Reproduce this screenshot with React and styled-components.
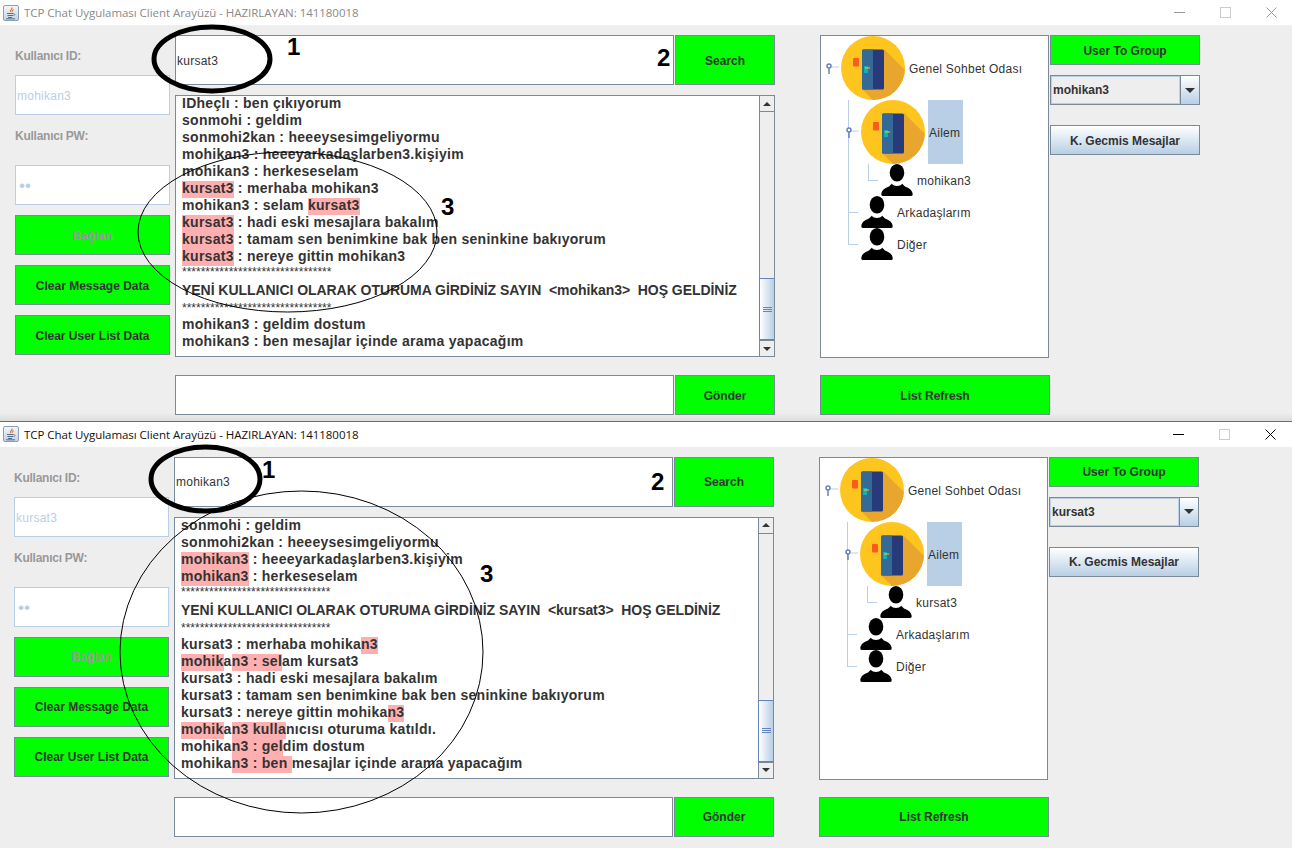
import React from 'react'
import styled, { createGlobalStyle } from 'styled-components'

const Global = createGlobalStyle`
  html, body { margin: 0; padding: 0; background: #eeeeee; }
  body { width: 1292px; height: 848px; overflow: hidden; font-family: "Liberation Sans", Arial, sans-serif; }
`

const Page = styled.div`
  width: 1292px;
  height: 848px;
  display: flex;
  flex-direction: column;
`

const Window = styled.section`
  position: relative;
  height: ${p => p.$height}px;
  display: flex;
  flex-direction: column;
  background: #eeeeee;
  border-top: ${p => (p.$active ? '1px solid #0f86e6' : 'none')};
`

const TitleBar = styled.header`
  height: 25px;
  flex: none;
  display: flex;
  align-items: center;
  background: #fff;
  padding-left: 3px;
  padding-right: ${p => (p.$active ? 16 : 15)}px;
`

const TitleText = styled.span`
  margin-left: 5px;
  font: 11.5px "Open Sans", "Liberation Sans", sans-serif;
  letter-spacing: -0.04px;
  color: ${p => (p.$active ? '#111' : '#8a8a8a')};
  white-space: pre;
`

const Controls = styled.div`
  margin-left: auto;
  display: flex;
  gap: 35px;
  color: ${p => (p.$active ? '#000' : '#999')};
`

const Content = styled.div`
  flex: 1;
  display: flex;
  align-items: flex-start;
  padding: 10px 0 0 ${p => (p.$active ? 14 : 15)}px;
  background: ${p => (p.$active ? '#eeeeee' : 'linear-gradient(#eeeeee 0, #eeeeee 388px, #dcdcdc 396px)')};
`

const LeftColumn = styled.div`
  width: 155px;
  display: flex;
  flex-direction: column;
`

const FieldLabel = styled.div`
  height: 20px;
  line-height: 20px;
  font-size: 12px;
  font-weight: bold;
  letter-spacing: -0.25px;
  color: #999999;
  margin-top: ${p => p.$top}px;
  margin-bottom: ${p => p.$bottom}px;
`

const DisabledField = styled.div`
  height: 40px;
  box-sizing: border-box;
  background: #fff;
  border: 1px solid #b8cfe5;
  padding: 1px 0 0 1px;
  line-height: 38px;
  font-size: 12px;
  letter-spacing: 0.25px;
  color: #b8cfe5;
`

const Dots = styled.span`
  font-size: 17px;
  letter-spacing: 0;
  margin-left: 2px;
`

const GreenButton = styled.div`
  box-sizing: border-box;
  height: ${p => p.$h || 40}px;
  width: ${p => (p.$w ? `${p.$w}px` : 'auto')};
  flex: none;
  margin-top: ${p => p.$top || 0}px;
  padding-top: 1px;
  background: #00ff00;
  border: 1px solid #7a8a99;
  display: flex;
  align-items: center;
  justify-content: center;
  font-size: 12px;
  font-weight: bold;
  color: ${p => (p.$disabled ? '#999999' : '#333333')};
`

const CenterColumn = styled.div`
  width: 600px;
  margin-left: 5px;
  display: flex;
  flex-direction: column;
`

const InputRow = styled.div`
  display: flex;
  gap: 1px;
  height: ${p => p.$h}px;
  margin-top: ${p => p.$top || 0}px;
`

const TextInput = styled.div`
  flex: 1;
  box-sizing: border-box;
  background: #fff;
  border: 1px solid #7a8a99;
  padding: 1px 0 0 1px;
  display: flex;
  align-items: center;
  font-size: 12px;
  letter-spacing: 0.25px;
  color: #333333;
`

const MessageBox = styled.div`
  margin-top: 10px;
  height: 262px;
  box-sizing: border-box;
  display: flex;
  background: #fff;
  border: 1px solid #7a8a99;
  border-right: none;
`

const MessageList = styled.div`
  flex: 1;
  overflow: hidden;
  padding-left: 6px;
  color: #333333;
  font-size: 14px;
  font-weight: bold;
`

const Line = styled.div`
  height: 17px;
  line-height: 15px;
  letter-spacing: 0.27px;
  white-space: pre;
`

const Banner = styled.div`
  height: 22px;
  line-height: 20px;
  letter-spacing: -0.05px;
  white-space: pre;
`

const Stars = styled.div`
  height: 14px;
  line-height: 12px;
  font-size: 12px;
  font-weight: normal;
  white-space: pre;

  ${Banner} + & {
    height: 15px;
  }
`

const Hit = styled.span`
  display: inline-block;
  height: 17px;
  background: #ffafaf;
`

const ScrollBar = styled.div`
  width: 16px;
  flex: none;
  display: flex;
  flex-direction: column;
  background: #eeeeee;
  border-left: 1px solid #7a8a99;
  border-right: 1px solid #7a8a99;
  box-sizing: border-box;
`

const ScrollButton = styled.div`
  height: 15px;
  flex: none;
  display: flex;
  align-items: center;
  justify-content: center;
  background: #eeeeee;
  border-${p => (p.$up ? 'bottom' : 'top')}: 1px solid #7a8a99;
`

const Arrow = styled.span`
  width: 0;
  height: 0;
  border-left: ${p => p.$size || 4}px solid transparent;
  border-right: ${p => p.$size || 4}px solid transparent;
  border-${p => (p.$up ? 'bottom' : 'top')}: ${p => p.$size || 4}px solid #333333;
`

const ScrollTrack = styled.div`
  flex: 1;
  display: flex;
  flex-direction: column;
  justify-content: flex-end;
`

const ScrollThumb = styled.div`
  height: 62px;
  box-sizing: border-box;
  margin-left: -1px;
  border: 1px solid #6382bf;
  border-right: none;
  background: linear-gradient(90deg, #ffffff, #b8cfe5);
  display: flex;
  flex-direction: column;
  align-items: center;
  justify-content: center;
  gap: 1px;
`

const Grip = styled.span`
  width: 9px;
  height: 1px;
  background: #6382bf;
`

const TreeColumn = styled.div`
  width: 230px;
  margin-left: 45px;
  display: flex;
  flex-direction: column;
`

const Tree = styled.div`
  width: 229px;
  height: 323px;
  box-sizing: border-box;
  background: #fff;
  border: 1px solid #7a8a99;
`

const TreeRow = styled.div`
  position: relative;
  display: flex;
  align-items: center;
  height: ${p => p.$h}px;
  padding-left: ${p => p.$indent}px;
  font-size: 12px;
  letter-spacing: 0.25px;
  color: #333333;
`

const TreeLabel = styled.span`
  align-self: stretch;
  display: flex;
  align-items: center;
  margin-left: ${p => (p.$selected ? 3 : 4)}px;
  padding: ${p => (p.$selected ? '2px 3px 0 1px' : '2px 0 0')};
  background: ${p => (p.$selected ? '#b8cfe5' : 'transparent')};
`

const Guide = styled.span`
  position: absolute;
  left: ${p => p.$left}px;
  top: 0;
  height: ${p => (p.$half ? '50%' : '100%')};
  width: 1px;
  background: #b8cfe5;
`

const Tick = styled.span`
  position: absolute;
  left: ${p => p.$left}px;
  top: 50%;
  width: 10px;
  height: 1px;
  background: #b8cfe5;
`

const Handle = styled.svg`
  position: absolute;
  left: ${p => p.$left}px;
  top: 50%;
  margin-top: -5px;
`

const RightColumn = styled.div`
  width: 150px;
  margin-left: 0;
  display: flex;
  flex-direction: column;
`

const Combo = styled.div`
  box-sizing: border-box;
  height: 30px;
  margin-top: 10px;
  display: flex;
  border: 1px solid #7a8a99;
`

const ComboValue = styled.div`
  flex: 1;
  box-sizing: border-box;
  border: 1px solid #b8cfe5;
  background: #eeeeee;
  padding-left: 1px;
  line-height: 26px;
  font-size: 12px;
  font-weight: bold;
  color: #333333;
`

const ComboButton = styled.div`
  width: 18px;
  border-left: 1px solid #7a8a99;
  display: flex;
  align-items: center;
  justify-content: center;
  background: linear-gradient(#ffffff, #b8cfe5);
`

const GradientButton = styled.div`
  box-sizing: border-box;
  height: 30px;
  margin-top: 20px;
  padding-top: 1px;
  border: 1px solid #7a8a99;
  display: flex;
  align-items: center;
  justify-content: center;
  background: linear-gradient(#ffffff, #b8cfe5);
  font-size: 12px;
  font-weight: bold;
  color: #333333;
`

const Marks = styled.svg`
  position: absolute;
  left: 0;
  top: 0;
  pointer-events: none;
`

const Number = styled.span`
  position: absolute;
  left: ${p => p.$x}px;
  top: ${p => p.$y}px;
  font-size: 24px;
  line-height: 24px;
  font-weight: bold;
  color: #000;
`

const JavaIcon = () => (
  <svg width="16" height="16" viewBox="0 0 16 16">
    <defs>
      <linearGradient id="jbox" x1="0" y1="0" x2="0" y2="1">
        <stop offset="0" stopColor="#f4f7fa" />
        <stop offset="1" stopColor="#c4d1dd" />
      </linearGradient>
    </defs>
    <rect x="0.5" y="0.5" width="15" height="15" rx="1.5" fill="url(#jbox)" stroke="#8ca0b3" />
    <path d="M9 2.5c1 1.5-2.5 2.5-1.5 4.500M10.500 4.500c-1 1-2 1.300-1.200 2.500" fill="none" stroke="#e8702a" strokeWidth="1.100" />
    <path d="M4 8.500h6.500M4.500 10.500h5.500M5 12.500h4M3 13.800h9" fill="none" stroke="#4f6f96" strokeWidth="1" />
    <path d="M10.500 8.800c1.800-.3 1.800 1.700 0 1.700" fill="none" stroke="#4f6f96" strokeWidth=".8" />
  </svg>
)

const WindowButtons = ({ active }) => (
  <Controls $active={active}>
    <svg width="11" height="11" viewBox="0 0 11 11"><path d="M0 5.500h11" stroke="currentColor" /></svg>
    <svg width="11" height="11" viewBox="0 0 11 11"><rect x=".5" y=".5" width="10" height="10" fill="none" stroke="#cccccc" /></svg>
    <svg width="11" height="11" viewBox="0 0 11 11"><path d="M.5 .5l10 10M10.500 .5l-10 10" stroke="currentColor" /></svg>
  </Controls>
)

const DoorIcon = ({ id }) => (
  <svg width="64" height="64" viewBox="0 0 64 64" style={{ flex: 'none' }}>
    <clipPath id={id}><circle cx="32" cy="32" r="32" /></clipPath>
    <circle cx="32" cy="32" r="32" fill="#fec51f" />
    <polygon points="43,13 64,34 64,64 32,64 21,53" fill="#e9a62f" clipPath={`url(#${id})`} />
    <rect x="21" y="13.500" width="22" height="40" rx="1.500" fill="#273b7a" />
    <path d="M22.500 13.500H32V53.500H22.500a1.500 1.500 0 0 1-1.500-1.500V15a1.500 1.500 0 0 1 1.500-1.500z" fill="#366a96" />
    <rect x="12" y="22" width="6" height="8.500" rx="1" fill="#fb5a20" />
    <rect x="23" y="30" width="4" height="7" fill="#10b0b8" />
    <rect x="24" y="31.500" width="5" height="1" fill="#ffc61b" />
  </svg>
)

const UserIcon = () => (
  <svg width="32" height="32" viewBox="0 0 32 32" style={{ flex: 'none' }}>
    <ellipse cx="16" cy="8.800" rx="7.300" ry="8.800" fill="#000" />
    <path d="M.3 30C1 26 3 24.500 8 22.500L10.800 19.800C13 22.800 19 22.800 21.200 19.800L24 22.500C29 24.500 31 26 31.700 30Q32 32 30 32H2Q0 32 .3 30Z" fill="#000" />
  </svg>
)

const TreeHandle = ({ left }) => (
  <Handle $left={left} width="13" height="12" viewBox="0 0 13 12">
    <path d="M6 4h7" stroke="#b8cfe5" />
    <circle cx="3" cy="3" r="2" fill="#fff" stroke="#6382bf" strokeWidth="1.500" />
    <path d="M3 5v6" stroke="#6382bf" strokeWidth="1.500" />
  </Handle>
)

// [..] in a line marks the parts the search painted
const Message = ({ text }) => (
  <Line>
    {text.split(/(\[[^\]]+\])/).map((part, i) =>
      part[0] === '[' ? <Hit key={i}>{part.slice(1, -1)}</Hit> : part
    )}
  </Line>
)

const STARS = '*'.repeat(32)

const topLines = [
  'IDheçlı : ben çıkıyorum',
  'sonmohi : geldim',
  'sonmohi2kan : heeeysesimgeliyormu',
  'mohikan3 : heeeyarkadaşlarben3.kişiyim',
  'mohikan3 : herkeseselam',
  '[kursat3] : merhaba mohikan3',
  'mohikan3 : selam [kursat3]',
  '[kursat3] : hadi eski mesajlara bakalım',
  '[kursat3] : tamam sen benimkine bak ben seninkine bakıyorum',
  '[kursat3] : nereye gittin mohikan3',
  { stars: true },
  { banner: 'YENİ KULLANICI OLARAK OTURUMA GİRDİNİZ SAYIN  <mohikan3>  HOŞ GELDİNİZ' },
  { stars: true },
  'mohikan3 : geldim dostum',
  'mohikan3 : ben mesajlar içinde arama yapacağım',
]

const bottomLines = [
  'sonmohi : geldim',
  'sonmohi2kan : heeeysesimgeliyormu',
  '[mohikan3] : heeeyarkadaşlarben3.kişiyim',
  '[mohikan3] : herkeseselam',
  { stars: true },
  { banner: 'YENİ KULLANICI OLARAK OTURUMA GİRDİNİZ SAYIN  <kursat3>  HOŞ GELDİNİZ' },
  { stars: true },
  'kursat3 : merhaba mohika[n3]',
  '[mohik]a[n3 : sel]am kursat3',
  'kursat3 : hadi eski mesajlara bakalım',
  'kursat3 : tamam sen benimkine bak ben seninkine bakıyorum',
  'kursat3 : nereye gittin mohika[n3]',
  '[mohik]a[n3 kulla]nıcısı oturuma katıldı.',
  'mohika[n3 : gel]dim dostum',
  'mohika[n3 : ben ]mesajlar içinde arama yapacağım',
]

const ChatWindow = ({ active, height, userId, otherUser, search, lines, marks, numbers }) => (
  <Window $active={active} $height={height}>
    <TitleBar $active={active}>
      <JavaIcon />
      <TitleText $active={active}>TCP Chat Uygulaması Client Arayüzü - HAZIRLAYAN: 141180018</TitleText>
      <WindowButtons active={active} />
    </TitleBar>
    <Content $active={active}>
      <LeftColumn>
        <FieldLabel $top={11} $bottom={9}>Kullanıcı ID:</FieldLabel>
        <DisabledField>{userId}</DisabledField>
        <FieldLabel $top={11} $bottom={19}>Kullanıcı PW:</FieldLabel>
        <DisabledField><Dots>••</Dots></DisabledField>
        <GreenButton $top={10} $disabled>Bağlan</GreenButton>
        <GreenButton $top={10}>Clear Message Data</GreenButton>
        <GreenButton $top={10}>Clear User List Data</GreenButton>
      </LeftColumn>

      <CenterColumn>
        <InputRow $h={50}>
          <TextInput>{search}</TextInput>
          <GreenButton $h={50} $w={100}>Search</GreenButton>
        </InputRow>
        <MessageBox>
          <MessageList>
            {lines.map((l, i) =>
              l.stars ? <Stars key={i}>{STARS}</Stars>
                : l.banner ? <Banner key={i}>{l.banner}</Banner>
                  : <Message key={i} text={l} />
            )}
          </MessageList>
          <ScrollBar>
            <ScrollButton $up><Arrow $up /></ScrollButton>
            <ScrollTrack>
              <ScrollThumb><Grip /><Grip /><Grip /></ScrollThumb>
            </ScrollTrack>
            <ScrollButton><Arrow /></ScrollButton>
          </ScrollBar>
        </MessageBox>
        <InputRow $h={40} $top={18}>
          <TextInput />
          <GreenButton $w={100}>Gönder</GreenButton>
        </InputRow>
      </CenterColumn>

      <TreeColumn>
        <Tree>
          <TreeRow $h={64} $indent={20}>
            <TreeHandle left={5} />
            <DoorIcon id={`door-a-${userId}`} />
            <TreeLabel>Genel Sohbet Odası</TreeLabel>
          </TreeRow>
          <TreeRow $h={64} $indent={40}>
            <Guide $left={27} />
            <TreeHandle left={25} />
            <DoorIcon id={`door-b-${userId}`} />
            <TreeLabel $selected>Ailem</TreeLabel>
          </TreeRow>
          <TreeRow $h={32} $indent={60}>
            <Guide $left={27} />
            <Guide $left={47} $half />
            <Tick $left={47} />
            <UserIcon />
            <TreeLabel>{userId}</TreeLabel>
          </TreeRow>
          <TreeRow $h={32} $indent={40}>
            <Guide $left={27} />
            <Tick $left={27} />
            <UserIcon />
            <TreeLabel>Arkadaşlarım</TreeLabel>
          </TreeRow>
          <TreeRow $h={32} $indent={40}>
            <Guide $left={27} $half />
            <Tick $left={27} />
            <UserIcon />
            <TreeLabel>Diğer</TreeLabel>
          </TreeRow>
        </Tree>
        <GreenButton $top={17}>List Refresh</GreenButton>
      </TreeColumn>

      <RightColumn>
        <GreenButton $h={30}>User To Group</GreenButton>
        <Combo>
          <ComboValue>{otherUser}</ComboValue>
          <ComboButton><Arrow $size={5} /></ComboButton>
        </Combo>
        <GradientButton>K. Gecmis Mesajlar</GradientButton>
      </RightColumn>
    </Content>

    <Marks width="1292" height={height} viewBox={`0 0 1292 ${height}`}>
      <ellipse {...marks.thick} fill="none" stroke="#000" strokeWidth="5" />
      <ellipse {...marks.thin} fill="none" stroke="#000" strokeWidth="1" />
    </Marks>
    {numbers.map(n => <Number key={n.t} $x={n.x} $y={n.y}>{n.t}</Number>)}
  </Window>
)

export default function App() {
  return (
    <Page>
      <Global />
      <ChatWindow
        height={421}
        userId="mohikan3"
        otherUser="mohikan3"
        search="kursat3"
        lines={topLines}
        marks={{
          thick: { cx: 212, cy: 59, rx: 58, ry: 32 },
          thin: { cx: 287.5, cy: 232, rx: 149.5, ry: 80 },
        }}
        numbers={[{ t: '1', x: 287, y: 35 }, { t: '2', x: 657, y: 46 }, { t: '3', x: 441, y: 195 }]}
      />
      <ChatWindow
        active
        height={427}
        userId="kursat3"
        otherUser="kursat3"
        search="mohikan3"
        lines={bottomLines}
        marks={{
          thick: { cx: 205.5, cy: 57, rx: 54.5, ry: 32 },
          thin: { cx: 301.5, cy: 230, rx: 181.5, ry: 161 },
        }}
        numbers={[{ t: '1', x: 262, y: 36 }, { t: '2', x: 651, y: 48 }, { t: '3', x: 480, y: 140 }]}
      />
    </Page>
  )
}
